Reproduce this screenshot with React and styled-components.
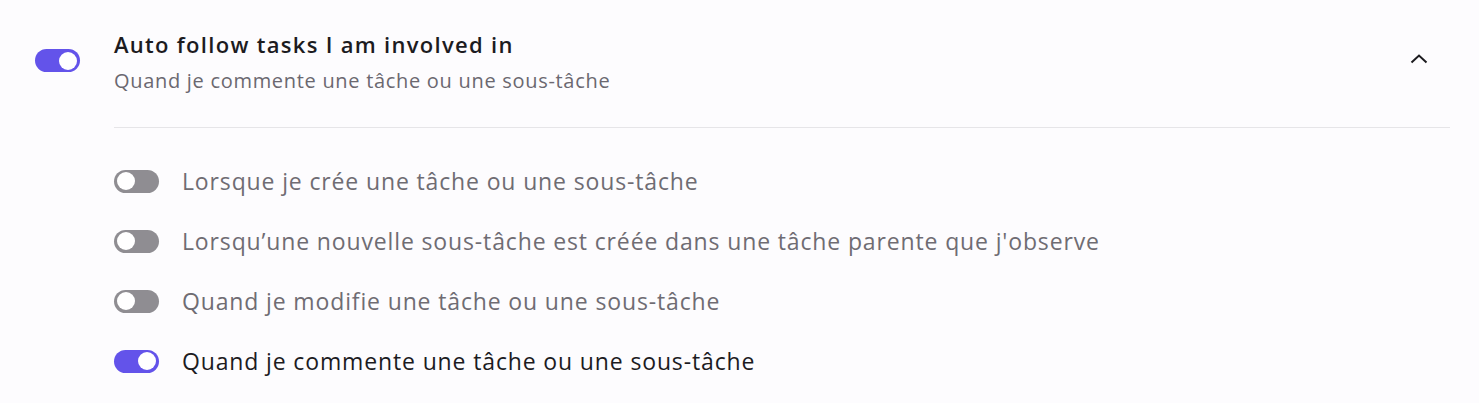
import React from "react";
import styled, { createGlobalStyle } from "styled-components";

const Global = createGlobalStyle`
  html, body { margin: 0; padding: 0; background: #fdfcfe; }
  body { font-family: "Open Sans", "Noto Sans", sans-serif; }
`;

const Page = styled.div`
  width: 1479px;
  height: 403px;
  box-sizing: border-box;
  padding: 30px 29px 0 35px;
  display: flex;
  gap: 34px;
  align-items: flex-start;
`;

const Track = styled.span`
  flex: none;
  box-sizing: border-box;
  width: 45px;
  height: 23px;
  border-radius: 12px;
  padding: 2px 3px;
  background: ${(p) => (p.$on ? "#6353ea" : "#8f8d92")};
  display: flex;
  justify-content: ${(p) => (p.$on ? "flex-end" : "flex-start")};
  align-items: center;
  margin-top: ${(p) => p.$offset || 0}px;
`;

const Knob = styled.span`
  width: 18px;
  height: 18px;
  border-radius: 50%;
  background: #ffffff;
`;

const Toggle = ({ on, offset }) => (
  <Track $on={on} $offset={offset}>
    <Knob />
  </Track>
);

const Main = styled.div`
  flex: 1;
  display: flex;
  flex-direction: column;
`;

const Header = styled.div`
  display: flex;
  align-items: flex-start;
  justify-content: space-between;
  padding-bottom: 32px;
  border-bottom: 1px solid #e6e5e8;
`;

const Titles = styled.div`
  display: flex;
  flex-direction: column;
  gap: 9px;
`;

const Title = styled.div`
  font-size: 22px;
  font-weight: 600;
  letter-spacing: 1.3px;
  line-height: 28px;
  color: #1c1b1f;
`;

const Subtitle = styled.div`
  font-size: 20px;
  letter-spacing: 0.7px;
  line-height: 28px;
  color: #6b6870;
`;

const Chevron = styled.svg`
  margin: 24px 22px 0 0;
  flex: none;
`;

const List = styled.div`
  padding-top: 23px;
  display: flex;
  flex-direction: column;
`;

const Row = styled.div`
  height: 60px;
  display: flex;
  align-items: center;
  gap: 23px;
`;

const Label = styled.span`
  font-size: 23px;
  letter-spacing: 0.86px;
  color: ${(p) => (p.$on ? "#1c1b1f" : "#6f6c73")};
`;

const items = [
  { text: "Lorsque je crée une tâche ou une sous-tâche", on: false },
  { text: "Lorsqu’une nouvelle sous-tâche est créée dans une tâche parente que j'observe", on: false },
  { text: "Quand je modifie une tâche ou une sous-tâche", on: false },
  { text: "Quand je commente une tâche ou une sous-tâche", on: true },
];

export default function App() {
  return (
    <>
      <Global />
      <Page>
        <Toggle on offset={19} />
        <Main>
          <Header>
            <Titles>
              <Title>Auto follow tasks I am involved in</Title>
              <Subtitle>Quand je commente une tâche ou une sous-tâche</Subtitle>
            </Titles>
            <Chevron width="18" height="10" viewBox="0 0 18 10">
              <polyline points="1.5,8.5 9,1.5 16.5,8.5" fill="none" stroke="#1c1b1f" strokeWidth="2" />
            </Chevron>
          </Header>
          <List>
            {items.map((it) => (
              <Row key={it.text}>
                <Toggle on={it.on} />
                <Label $on={it.on}>{it.text}</Label>
              </Row>
            ))}
          </List>
        </Main>
      </Page>
    </>
  );
}
